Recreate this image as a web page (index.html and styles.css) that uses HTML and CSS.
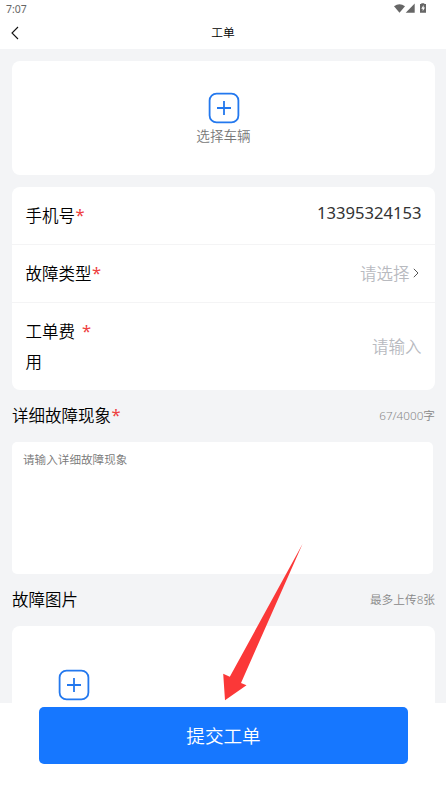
FILE: index.html
```html
<!DOCTYPE html>
<html lang="zh-CN">
<head>
<meta charset="utf-8">
<meta name="viewport" content="width=device-width, initial-scale=1">
<title>工单</title>
<link rel="stylesheet" href="styles.css">
</head>
<body>
<div class="screen">
  <div class="status">
    <span>7:07</span>
    <svg class="status-icons" width="34" height="12" viewBox="0 0 34 12" fill="#666">
      <path d="M0 3.300Q5.500-.9 11 3.300L5.500 9.800Z"/>
      <path d="M20.700.6v9.200h-9Z"/>
      <path d="M27.300 1V.2h3V1h1.700v8.800h-6V1Z"/>
      <path d="M29.600 2l-2.300 3.800h1.400v2.500L31 4.600h-1.400Z" fill="#fff"/>
    </svg>
  </div>
  <header class="nav">
    <svg class="back" width="8" height="14" viewBox="0 0 8 14"><path d="M7 1L1 7l6 6" fill="none" stroke="#111" stroke-width="1.100"/></svg>
    <h1>工单</h1>
  </header>
  <main class="content">
    <section class="card vehicle">
      <svg class="plus" width="32" height="32" viewBox="0 0 32 32"><rect x="1.600" y="1.600" width="28.800" height="28.800" rx="7"/><path d="M16 9v14M9 16h14"/></svg>
      <span>选择车辆</span>
    </section>
    <section class="card form">
      <div class="row">
        <div class="label">手机号<i>*</i></div>
        <div class="phone">13395324153</div>
      </div>
      <div class="row">
        <div class="label">故障类型<i>*</i></div>
        <div class="value select">请选择<svg width="6" height="10" viewBox="0 0 6 10"><path d="M.8.8L5 5 .8 9.200" fill="none" stroke="#555"/></svg></div>
      </div>
      <div class="row fee">
        <div class="label wrap"><span>工单费用</span><i>*</i></div>
        <div class="value">请输入</div>
      </div>
    </section>
    <div class="heading"><h2>详细故障现象<i>*</i></h2><span>67/4000字</span></div>
    <div class="textarea">请输入详细故障现象</div>
    <div class="heading"><h2>故障图片</h2><span>最多上传8张</span></div>
    <section class="card upload">
      <svg class="plus" width="32" height="32" viewBox="0 0 32 32"><rect x="1.600" y="1.600" width="28.800" height="28.800" rx="7"/><path d="M16 9v14M9 16h14"/></svg>
    </section>
  </main>
  <footer class="footer"><button class="submit">提交工单</button></footer>
  <svg class="arrow" width="84" height="160" viewBox="0 0 84 160"><path d="M82.500 3L21 142l5.500 2.200L5 159.300 3.200 132.800l6.600 3Z" fill="#fb3838"/></svg>
</div>
</body>
</html>
```
FILE: styles.css
```css
* { box-sizing: border-box; }
body {
  margin: 0;
  background: #fff;
  color: #000;
  font-family: "Noto Sans", "Noto Sans CJK SC", sans-serif;
  font-size: 16.5px;
  font-weight: 350;
}
h1, h2 { margin: 0; font-weight: 350; }
i {
  position: relative;
  left: .5px;
  top: -1px;
  color: #ee4040;
  font-style: normal;
  font-weight: 400;
}
svg { display: block; flex: none; }
.screen {
  position: relative;
  display: flex;
  flex-direction: column;
  width: 446px;
  height: 793px;
  overflow: hidden;
}
.status {
  display: flex;
  justify-content: space-between;
  height: 18px;
  padding: 3px 18px 0 6px;
  color: #666;
  font-size: 10.5px;
  font-weight: 400;
  line-height: 13px;
}
.nav {
  display: grid;
  grid-template-columns: 40px 1fr 40px;
  align-items: center;
  height: 31px;
}
.back { margin-left: 11px; margin-top: -1px; }
.nav h1 { padding-bottom: 3px; font-size: 11.7px; line-height: 20px; text-align: center; }
.content {
  height: 654px;
  padding: 12px 11px 0 12px;
  overflow: hidden;
  background: #f3f4f6;
}
.card { background: #fff; border-radius: 8px; }
.plus { fill: none; stroke: #2378ee; stroke-width: 1.8; }
.vehicle {
  display: flex;
  flex-direction: column;
  align-items: center;
  height: 114px;
  padding-top: 31px;
  color: #777;
  font-size: 13.6px;
  line-height: 24px;
}
.form { height: 203px; margin-top: 12px; }
.row {
  display: flex;
  justify-content: space-between;
  align-items: center;
  height: 58px;
  padding: 0 13.5px;
  border-bottom: 1px solid #f4f4f5;
}
.row.fee { height: 87px; border: 0; }
.label { line-height: 30px; }
.wrap { display: flex; }
.wrap span { width: 56px; padding-right: 5px; }
.phone { padding-bottom: 6px; color: #333; font-size: 16.6px; font-weight: 400; }
.value { padding-bottom: 2px; color: #b8babf; }
.select { display: flex; align-items: center; gap: 3px; padding-right: 3px; }
.heading {
  display: flex;
  justify-content: space-between;
  align-items: center;
  height: 52px;
  padding-bottom: 2px;
}
.heading h2 { font-size: 16.5px; }
.heading span { padding-bottom: 1px; color: #888; font-size: 11.7px; }
.textarea {
  width: 421px;
  height: 132px;
  padding: 8px 11px;
  border-radius: 5px;
  background: #fff;
  color: #777;
  font-size: 11.6px;
  line-height: 20px;
}
.upload { height: 120px; padding: 43px 46px; }
.footer { height: 90px; padding: 4px 38px 0 39px; }
.submit {
  display: block;
  width: 100%;
  height: 57px;
  padding: 0 0 2px;
  border: 0;
  border-radius: 5px;
  background: #1677ff;
  color: #fff;
  font: inherit;
  font-size: 18.6px;
}
.arrow { position: absolute; left: 220px; top: 541px; }
```
